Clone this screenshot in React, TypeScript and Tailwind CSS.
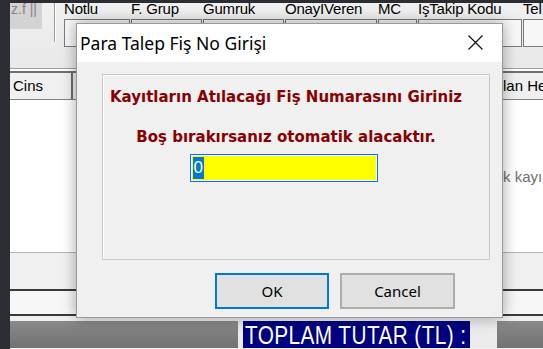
import React from 'react';

// arka plandaki form alanları
const fields = [
  { label: 'Notlu', w: 66 },
  { label: 'F. Grup', w: 71 },
  { label: 'Gumruk', w: 81 },
  { label: 'OnayIVeren', w: 92 },
  { label: 'MC', w: 39 },
  { label: 'İşTakip Kodu', w: 104 },
  { label: 'Tel', w: 60 },
];

function Background() {
  return (
    <div className="flex h-full flex-col bg-[#f0f0f0] font-['Liberation_Sans',sans-serif] text-[15px] text-black">
      {/* üst form satırı */}
      <div className="flex h-[65px] overflow-hidden bg-gradient-to-b from-[#f0f0f0] to-[#e9e9e9]">
        <div className="h-[26px] w-[32px] shrink-0 overflow-hidden whitespace-nowrap bg-[#d3d3d3] pl-[1px] text-[14px] leading-[12px] text-[#8a7f86]">
          z.f ||
        </div>
        <div className="ml-[12px] h-[39px] w-[2px] shrink-0 border-l border-[#9a9a9a] bg-white" />
        <div className="ml-[8px] flex">
          {fields.map((f) => (
            <div key={f.label} className="mr-[1px] flex shrink-0 flex-col" style={{ width: f.w }}>
              <div className="-mt-[2px] h-[16px] whitespace-nowrap leading-[16px] tracking-[-0.2px]">{f.label}</div>
              <div className="mt-[2px] h-[28px] border border-[#7a7a7a] bg-[#f7f7f7]" />
            </div>
          ))}
        </div>
      </div>
      {/* tablo başlığı */}
      <div className="h-[5px] border-t border-b-2 border-[#a0a0a0] border-b-[#707070] bg-white" />
      <div className="flex h-[27px] border-b border-[#808080] bg-[#f0f0f0]">
        <div className="flex w-[63px] items-center border-r-2 border-[#6d6d6d] pl-[3px]">Cins</div>
        <div className="flex-1" />
        <div className="flex w-[43px] items-center overflow-hidden border-l border-[#6d6d6d] pl-[2px] whitespace-nowrap">lan He</div>
      </div>
      {/* tablo gövdesi */}
      <div className="flex h-[152px] items-center justify-end bg-white pt-[2px] text-[#707070]">
        <span className="w-[40px] overflow-hidden whitespace-nowrap">k kayı</span>
      </div>
      <div className="h-[37px] border-t border-[#b5b5b5] bg-[#f0f0f0]" />
      <div className="h-[27px] border-y-2 border-[#3a3a3a] bg-[#f7f7f7]" />
      {/* alt toplam çubuğu */}
      <div className="mt-[5px] flex h-[27px] bg-[#ececec]">
        <div className="w-[228px] bg-gradient-to-b from-[#8a8a8a] to-[#727272]" />
        <div className="ml-[5px] flex w-[227px] items-end bg-[#000080] pl-[2px] text-white">
          <span className="origin-left scale-x-[0.8] whitespace-nowrap text-[26px] leading-[26px] tracking-[0.5px]">
            TOPLAM TUTAR (TL) :
          </span>
        </div>
        <div className="ml-[27px] flex-1 bg-gradient-to-b from-[#8a8a8a] to-[#727272]" />
      </div>
    </div>
  );
}

function Dialog() {
  return (
    <div className="absolute left-[76px] top-[23px] flex h-[295px] w-[427px] flex-col border border-[#9a9a9a] bg-[#f0f0f0] shadow-[0_0_14px_rgba(0,0,0,0.35)]">
      {/* başlık çubuğu */}
      <div className="flex h-[38px] items-center justify-between bg-white pl-[3px] pr-[19px]">
        <span className="font-['Noto_Sans',sans-serif] text-[17.5px] leading-[24px] text-black">Para Talep Fiş No Girişi</span>
        <svg width="15" height="15" viewBox="0 0 15 15" className="-mt-[1px]">
          <path d="M0.5 0.5 L14.5 14.5 M14.5 0.5 L0.5 14.5" stroke="#111" strokeWidth="1.2" />
        </svg>
      </div>
      {/* gövde */}
      <div className="flex flex-1 flex-col pl-[25px]">
        <div className="mt-[12px] flex h-[186px] w-[388px] flex-col items-center border border-[#c9c9c9] pr-[20px] shadow-[inset_1px_1px_0_#fff] font-['DejaVu_Sans',sans-serif] text-[15px] font-bold leading-[18px] text-[#880000]">
          <div className="mt-[13px] whitespace-nowrap">Kayıtların Atılacağı Fiş Numarasını Giriniz</div>
          <div className="mt-[22px] whitespace-nowrap">Boş bırakırsanız otomatik alacaktır.</div>
          <div className="mr-[5px] mt-[8px] flex h-[28px] w-[188px] items-center border border-[#0078d7] bg-[#ffff00] pl-[2px] shadow-[inset_0_0_0_1px_#fff]">
            <span className="bg-[#0078d7] px-[1px] font-['Liberation_Sans',sans-serif] text-[17px] font-normal leading-[22px] text-white">0</span>
          </div>
        </div>
        <div className="mt-[13px] flex pl-[113px] font-['Noto_Sans',sans-serif] text-[15px] text-black">
          <button className="h-[36px] w-[114px] border-2 border-[#0078d7] bg-[#e1e1e1]">OK</button>
          <button className="ml-[11px] h-[36px] w-[115px] border-2 border-[#adadad] bg-[#e1e1e1]">Cancel</button>
        </div>
      </div>
    </div>
  );
}

export default function App() {
  return (
    <div className="relative h-[349px] w-[543px] overflow-hidden bg-[#2b2d33] pl-[10px] pt-[3px]">
      <Background />
      <Dialog />
    </div>
  );
}
